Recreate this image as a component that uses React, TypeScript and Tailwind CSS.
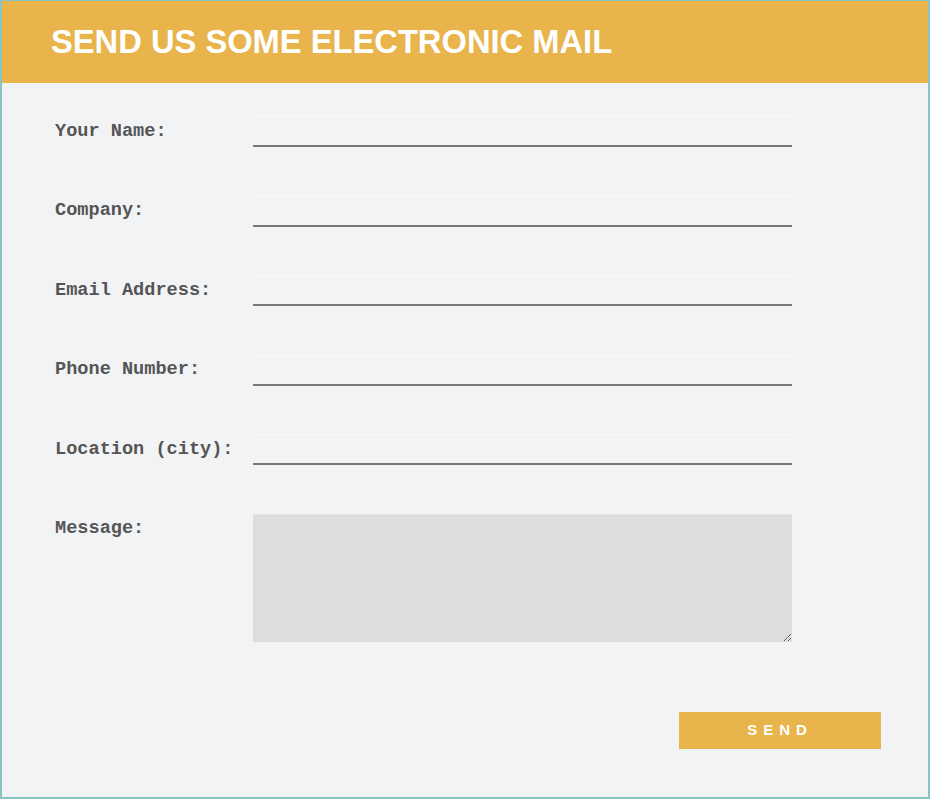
import React from "react";

const fields = [
  { label: "Your Name:", name: "name", type: "text" },
  { label: "Company:", name: "company", type: "text" },
  { label: "Email Address:", name: "email", type: "email" },
  { label: "Phone Number:", name: "phone", type: "tel" },
  { label: "Location (city):", name: "city", type: "text" },
];

const labelCls =
  "w-[198px] shrink-0 text-[18.6px] font-bold text-[#555] font-['Liberation_Mono','Courier_New',monospace] whitespace-nowrap";

export default function App() {
  return (
    <div className="w-[930px] h-[799px] bg-[#f2f3f5] border-2 border-t border-[#86c5c4] flex flex-col overflow-hidden">
      {/* Header */}
      <div className="h-[82px] shrink-0 bg-[#e8b44b] flex items-center pl-[49px]">
        <h1 className="text-[32.7px] font-bold text-white font-['Liberation_Sans',Arial,sans-serif] leading-none">
          SEND US SOME ELECTRONIC MAIL
        </h1>
      </div>

      <form className="flex flex-col pt-[33px] pl-[53px] pr-[47px]">
        <div className="flex flex-col gap-[48.5px]">
          {fields.map((f) => (
            <div key={f.name} className="flex items-center h-[31px]">
              <label htmlFor={f.name} className={labelCls}>
                {f.label}
              </label>
              <input
                id={f.name}
                name={f.name}
                type={f.type}
                className="w-[539px] h-[31px] bg-transparent border-t border-t-[#fafafa] border-b-2 border-b-[#777] outline-none px-1"
              />
            </div>
          ))}
        </div>

        <div className="flex items-start mt-[49px]">
          <label htmlFor="message" className={labelCls + " pt-[1px]"}>
            Message:
          </label>
          <textarea
            id="message"
            name="message"
            className="w-[539px] h-[128px] bg-[#dddddd] border-t border-t-[#e6e6e6] outline-none block"
          />
        </div>

        <div className="flex justify-end mt-[70px]">
          <button
            type="button"
            className="w-[202px] h-[37px] bg-[#e8b44b] text-white text-[15px] font-bold tracking-[6px] font-['Liberation_Sans',Arial,sans-serif]"
          >
            SEND
          </button>
        </div>
      </form>
    </div>
  );
}
